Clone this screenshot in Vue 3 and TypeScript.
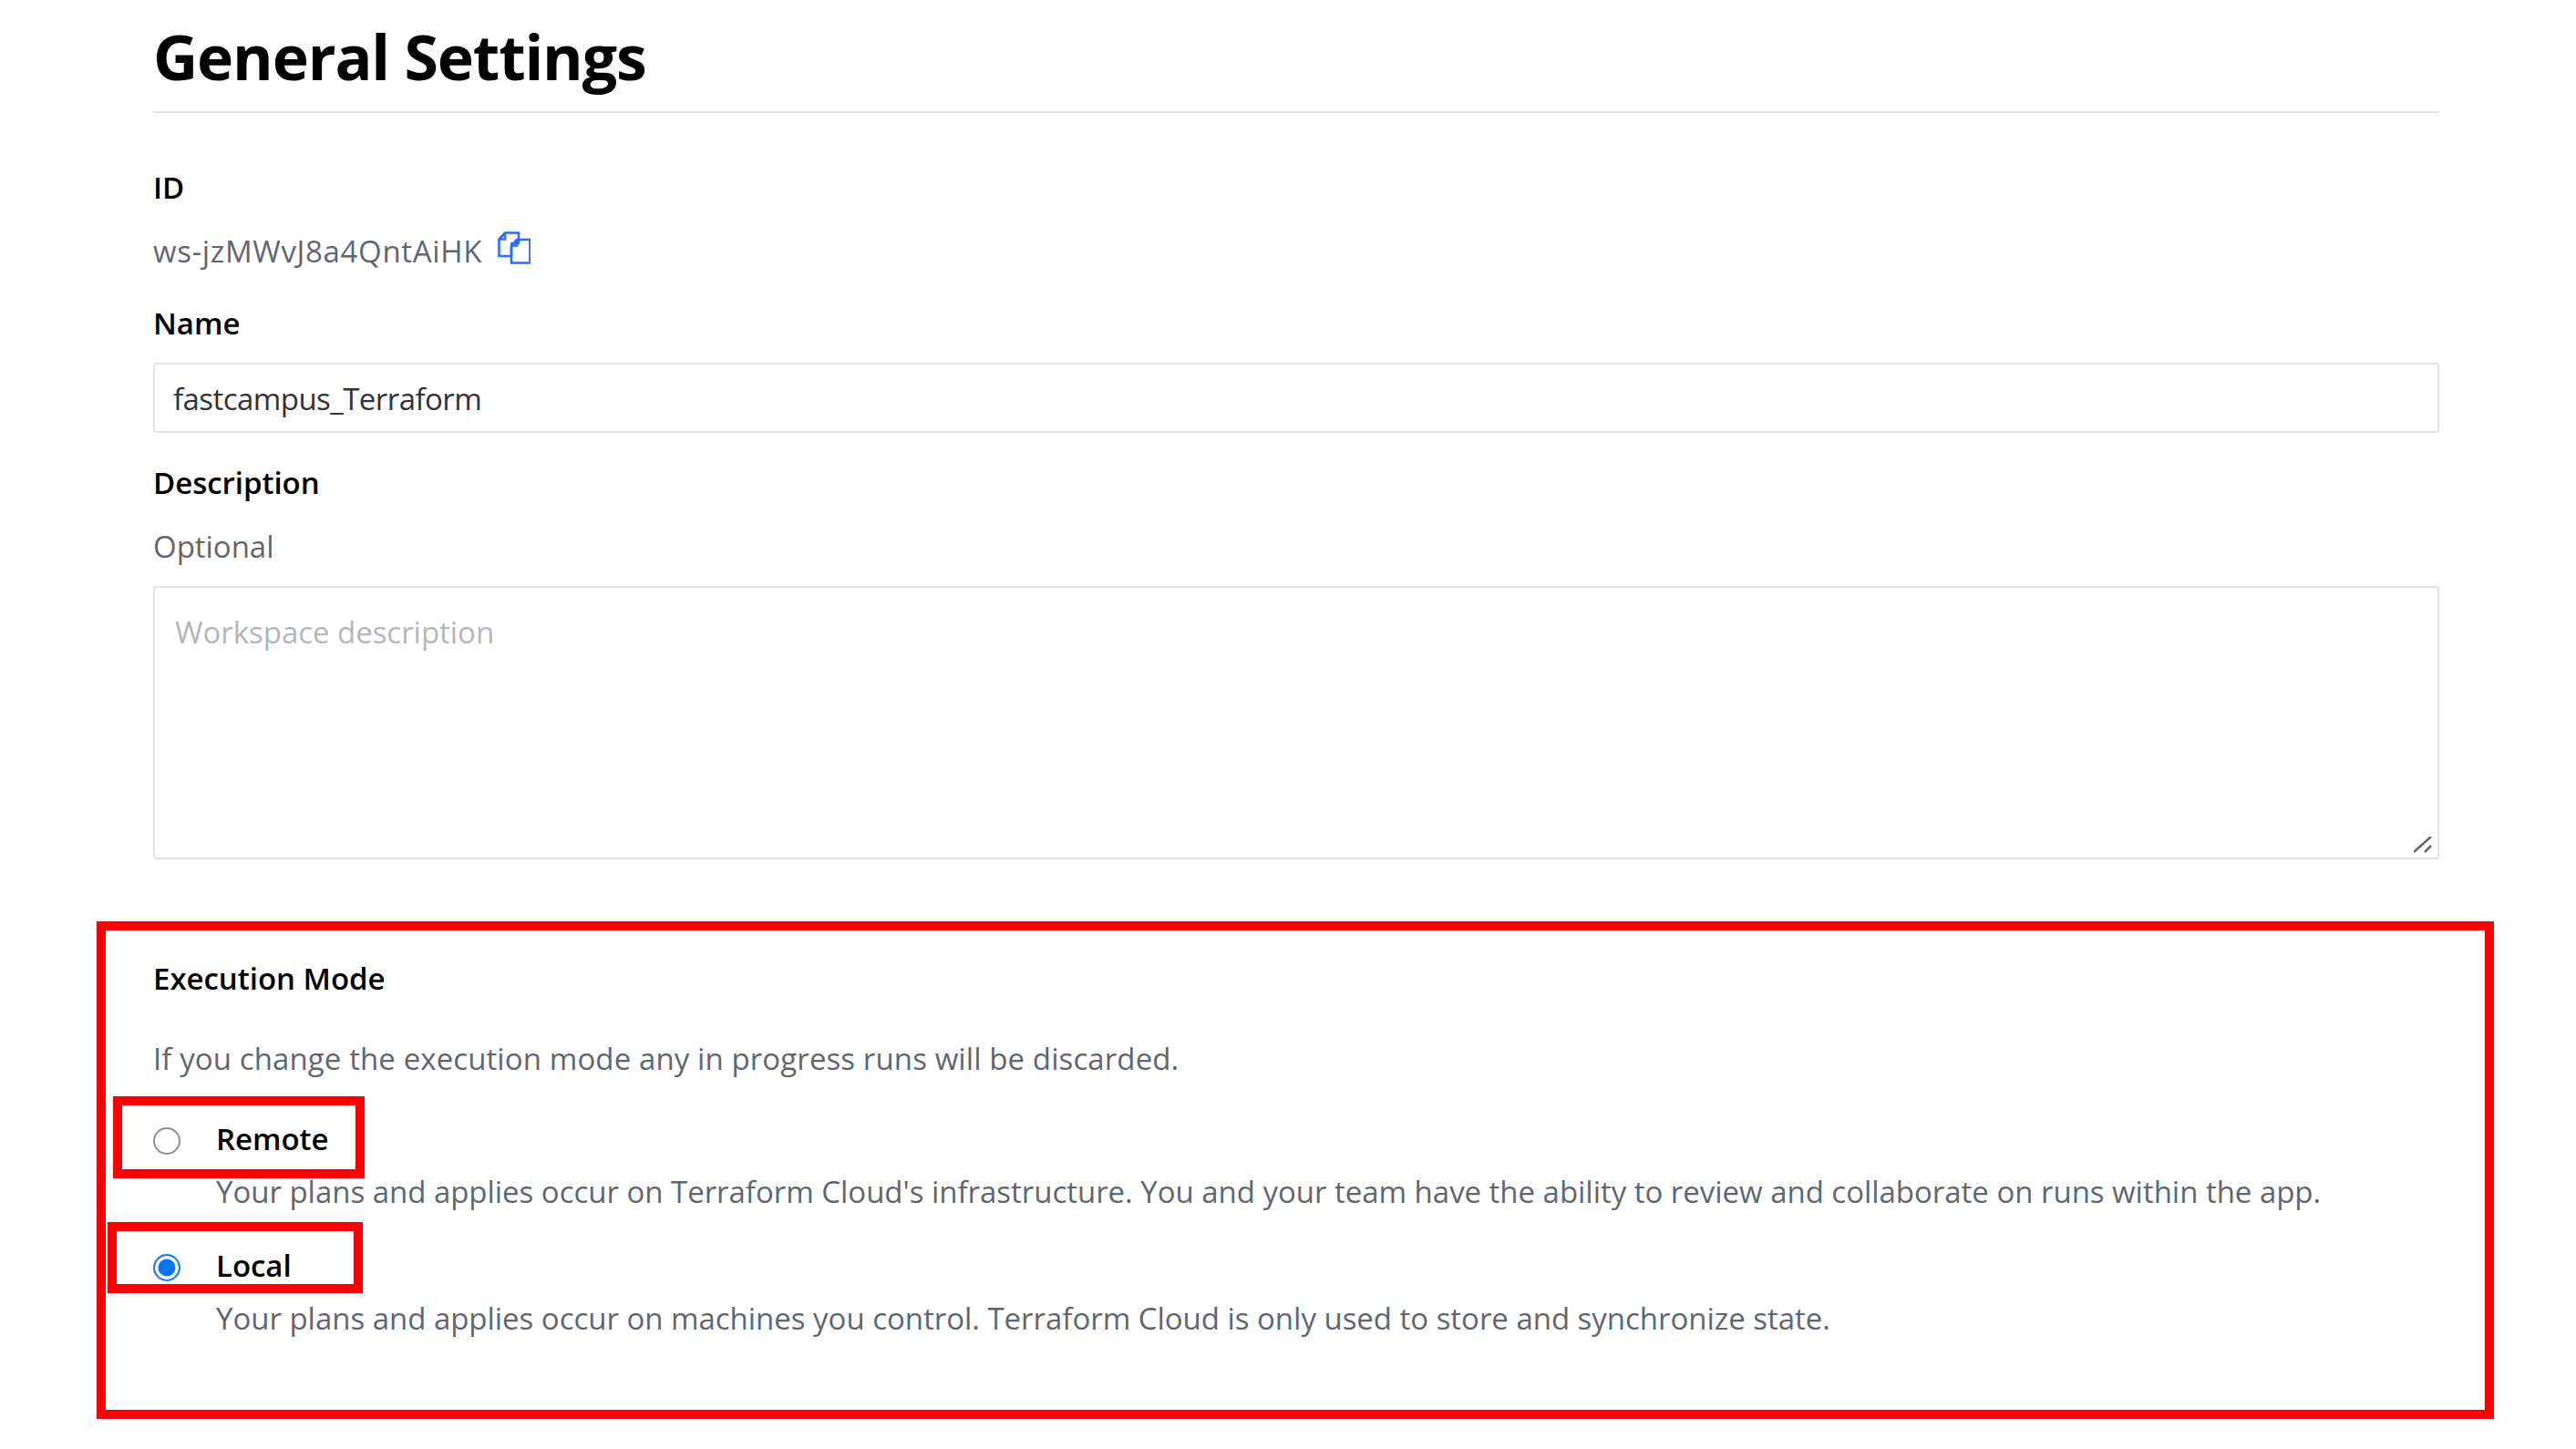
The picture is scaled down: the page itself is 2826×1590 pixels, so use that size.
<script setup lang="ts">
interface Mode { id: string; label: string; desc: string; checked: boolean }
const modes: Mode[] = [
  { id: 'remote', label: 'Remote', desc: "Your plans and applies occur on Terraform Cloud's infrastructure. You and your team have the ability to review and collaborate on runs within the app.", checked: false },
  { id: 'local', label: 'Local', desc: 'Your plans and applies occur on machines you control. Terraform Cloud is only used to store and synchronize state.', checked: true },
]
</script>

<template>
  <main class="page">
    <h1 class="title">General Settings</h1>

    <section class="field-id">
      <div class="label">ID</div>
      <div class="id-row">
        <span class="muted ws-id">ws-jzMWvJ8a4QntAiHK</span>
        <svg class="copy" width="36" height="36" viewBox="0 0 36 36" fill="none" stroke="#2f6bff" stroke-width="2.6">
          <path d="M8 1.500H23V13H15.500L15 19V27H1.500V8.500Z" />
          <path d="M8 2V8.500H1.500" />
          <path d="M21 9H35.500V34.500H15V15.500Z" />
          <path d="M21 9.500V15.500H15" />
        </svg>
      </div>
    </section>

    <label class="label name-label" for="name">Name</label>
    <input id="name" class="input" type="text" value="fastcampus_Terraform" />

    <div class="label desc-label">Description</div>
    <div class="muted optional">Optional</div>
    <div class="area-wrap">
      <textarea class="area" placeholder="Workspace description"></textarea>
      <svg class="grip" width="20" height="18" viewBox="0 0 20 18" stroke="#666" stroke-width="2.500">
        <path d="M0 17L19 0M12 17L19 10" />
      </svg>
    </div>

    <section class="exec">
      <div class="label">Execution Mode</div>
      <p class="muted exec-note">If you change the execution mode any in progress runs will be discarded.</p>
      <div v-for="m in modes" :key="m.id" class="mode">
        <label class="mode-head">
          <input class="radio" type="radio" name="mode" :checked="m.checked" />
          <span class="label">{{ m.label }}</span>
        </label>
        <p class="muted mode-desc">{{ m.desc }}</p>
      </div>
    </section>

    <div class="mark mark-big"></div>
    <div class="mark mark-remote"></div>
    <div class="mark mark-local"></div>
  </main>
</template>

<style>
html, body { background: #fff; overflow: hidden; }
</style>

<style scoped>
.page {
  position: relative;
  width: 2826px;
  height: 1590px;
  overflow: hidden;
  box-sizing: border-box;
  padding: 0 150px 0 168px;
  font-family: "Open Sans", "Liberation Sans", sans-serif;
  font-size: 33px;
  letter-spacing: -0.03px;
  line-height: 44px;
  color: #000;
  background: #fff;
}
.title {
  margin: 0;
  height: 122px;
  box-sizing: content-box;
  border-bottom: 2px solid #dee2e6;
  font-size: 68px;
  font-weight: 700;
  line-height: 124px;
  letter-spacing: -1.15px;
}
.label { font-weight: 600; color: #000; }
.muted { color: #5f6670; }
.ws-id { letter-spacing: 0.65px; }
.field-id { margin-top: 60px; }
.id-row { display: flex; align-items: center; gap: 17px; margin-top: 26px; }
.copy { margin-top: -9px; }
.name-label { display: block; margin-top: 35px; }
.input {
  display: block;
  width: 100%;
  height: 77px;
  margin-top: 21px;
  padding: 2px 20px 0;
  box-sizing: border-box;
  border: 2px solid #dee2e6;
  border-radius: 4px;
  font: inherit;
  letter-spacing: -0.55px;
  color: #333;
  outline: none;
}
.desc-label { margin-top: 33px; }
.optional { margin-top: 26px; }
.area-wrap { position: relative; margin-top: 21px; height: 300px; }
.area {
  display: block;
  width: 100%;
  height: 100%;
  padding: 27px 22px;
  box-sizing: border-box;
  border: 2px solid #dee2e6;
  border-radius: 4px;
  font: inherit;
  letter-spacing: inherit;
  resize: none;
  outline: none;
}
.area::placeholder { color: #b3b7bc; opacity: 1; }
.grip { position: absolute; right: 8px; bottom: 7px; }
.exec { margin-top: 109px; }
.exec-note { margin: 44px 0 0; letter-spacing: 0.1px; }
.mode { margin-top: 44px; }
.mode + .mode { margin-top: 37px; }
.mode-head { display: flex; align-items: center; gap: 39px; height: 44px; }
.radio {
  appearance: none;
  flex: none;
  width: 30px;
  height: 30px;
  margin: 3px 0 0;
  box-sizing: border-box;
  border: 2.5px solid #8f8f8f;
  border-radius: 50%;
  background: #fff;
}
.radio:checked {
  border-color: #1a7ff0;
  background: #0a75f5;
  box-shadow: inset 0 0 0 3.5px #fff;
}
.mode-desc { margin: 14px 0 0 69px; }
.mark { position: absolute; box-sizing: border-box; border: 10px solid #f00; }
.mark-big { left: 106px; top: 1011px; width: 2630px; height: 546px; }
.mark-remote { left: 124px; top: 1203px; width: 276px; height: 90px; }
.mark-local { left: 118px; top: 1341px; width: 280px; height: 78px; }
</style>
